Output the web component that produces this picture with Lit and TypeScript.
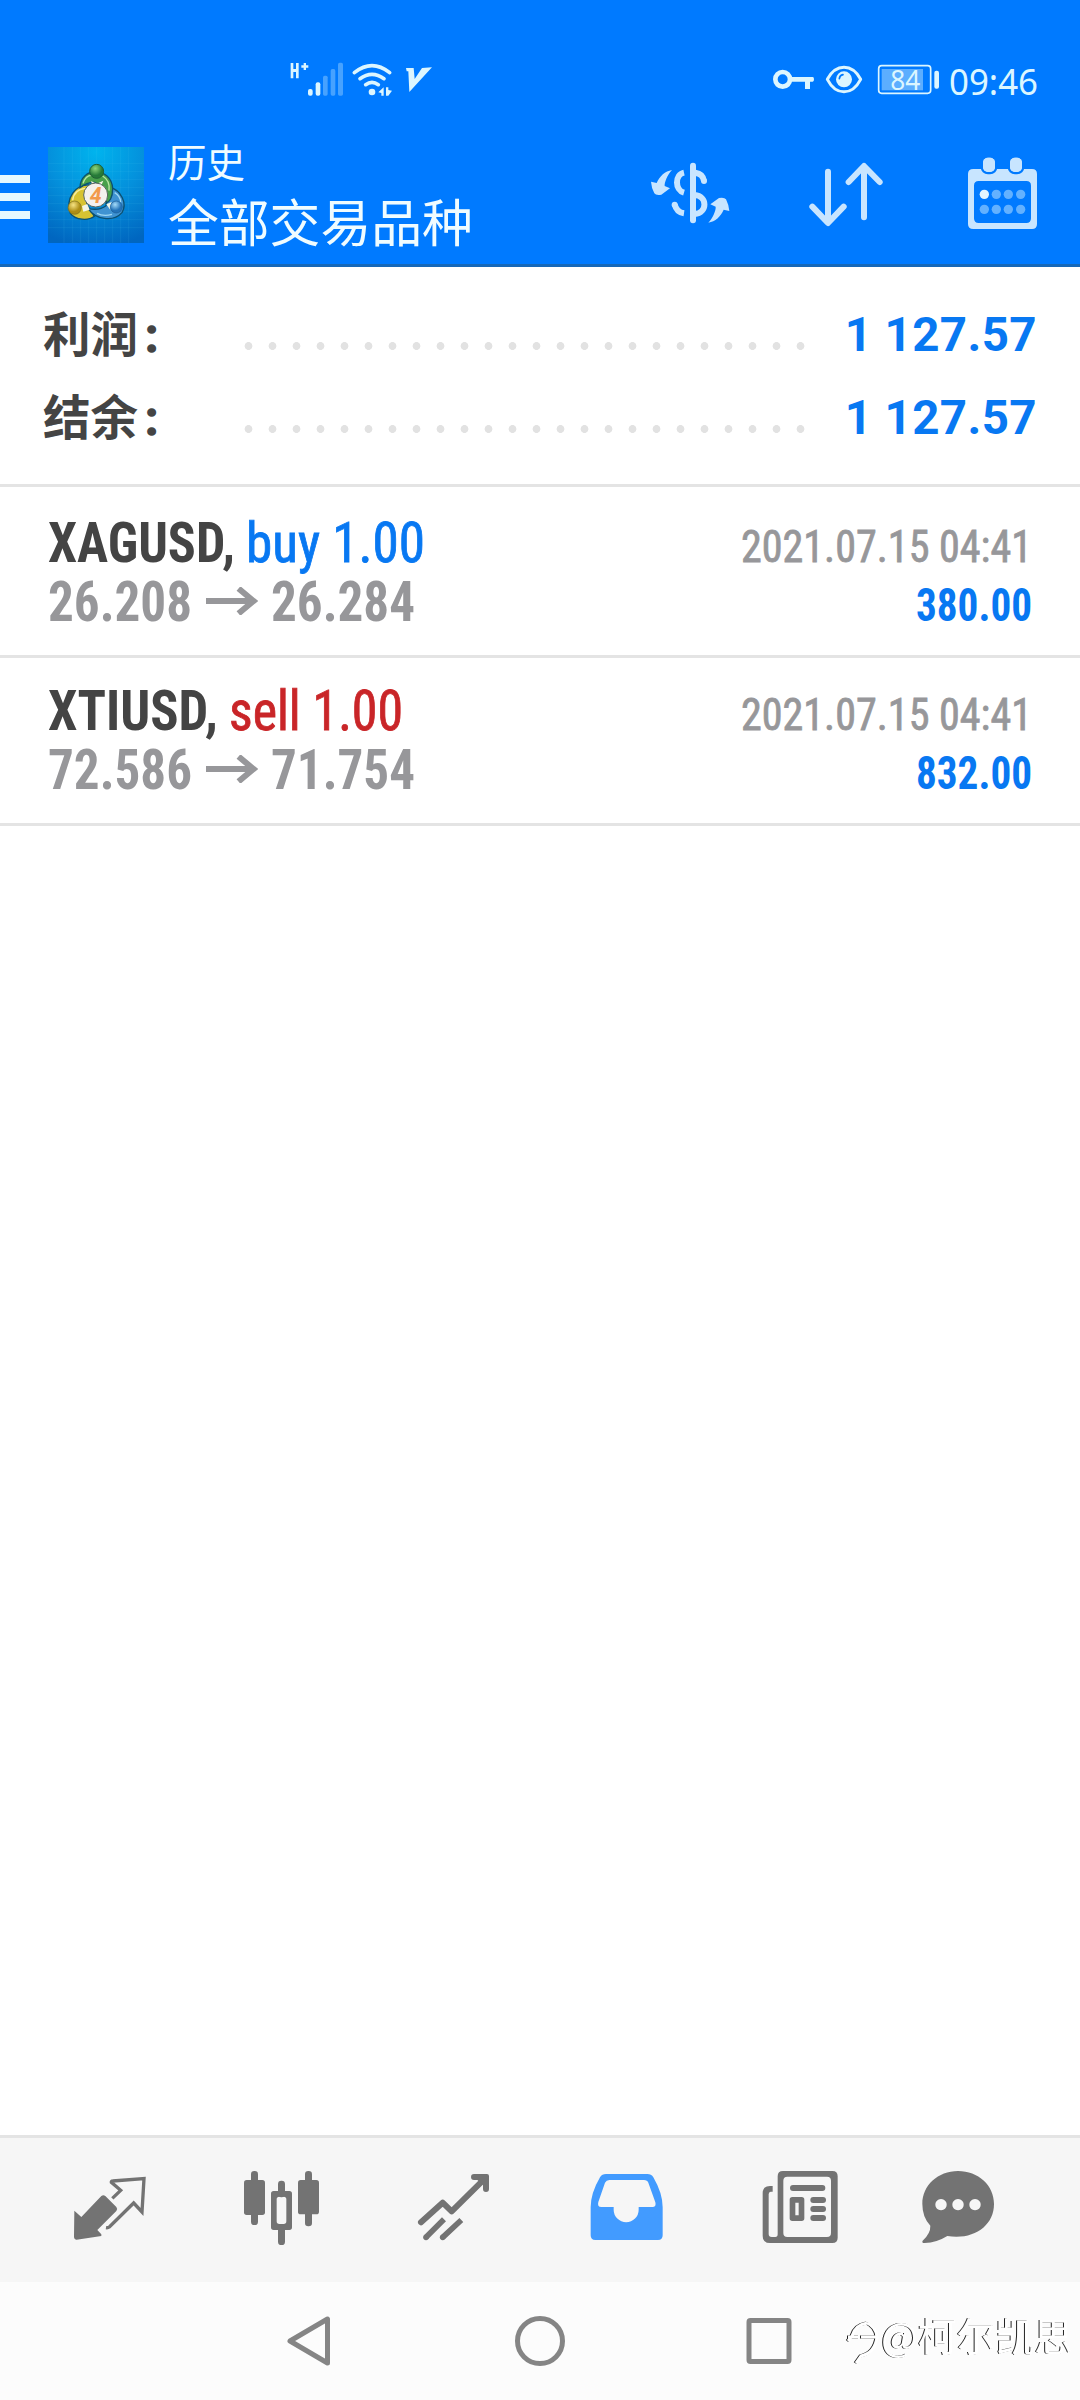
import { LitElement, html, svg, css } from "lit";
import { customElement } from "lit/decorators.js";

interface Segment {
  text: string;
  width: number;
  tone: string;
}

interface Deal {
  symbol: Segment;
  side: Segment;
  open: string;
  close: string;
  time: string;
  profit: string;
}

const deals: Deal[] = [
  {
    symbol: { text: "XAGUSD,", width: 187, tone: "ink bold" },
    side: { text: "buy 1.00", width: 179, tone: "blue regular" },
    open: "26.208",
    close: "26.284",
    time: "2021.07.15 04:41",
    profit: "380.00",
  },
  {
    symbol: { text: "XTIUSD,", width: 170, tone: "ink bold" },
    side: { text: "sell 1.00", width: 174, tone: "red regular" },
    open: "72.586",
    close: "71.754",
    time: "2021.07.15 04:41",
    profit: "832.00",
  },
];

const totals = [
  { label: "利润", value: "1 127.57" },
  { label: "结余", value: "1 127.57" },
];

/* Condensed text run fitted to a fixed advance width. */
const condensed = (text: string, width: number, size: number, tone: string, base = 59.5) => html`
  <svg class="run ${tone}" width=${width} height="60" viewBox="0 0 ${width} 60">
    <text x="0" y=${base} font-size=${size} textLength=${width} lengthAdjust="spacingAndGlyphs">${text}</text>
  </svg>
`;

const tabs = [
  svg`<path d="M103 272L124 291L184 228Q190 223 196 228L229 261Q234 267 229 273L172 330L184 343V348L110 359Q103 360 102 352Z"/>
    <path class="line" stroke-width="10" d="M217 235L242 211L214 187Q213 183 218 183L312 176L306 276L281 249L208 321Q204 324 198 323"/>`,
  svg`<rect x="633" y="153" width="21" height="162" rx="10"/><rect x="612" y="180" width="63" height="105" rx="8"/>
    <rect x="795" y="153" width="21" height="166" rx="10"/><rect x="774" y="180" width="63" height="103" rx="8"/>
    <rect x="714" y="182" width="21" height="50" rx="10"/><rect x="714" y="313" width="21" height="62" rx="10"/>
    <path fill-rule="evenodd" d="M701 213H748Q756 213 756 221V322Q756 330 748 330H701Q693 330 693 322V221Q693 213 701 213ZM718 230Q710 230 710 238V304Q710 312 718 312H731Q739 312 739 304V238Q739 230 731 230Z"/>`,
  svg`<path class="line" stroke-width="18" stroke-linecap="round" stroke-linejoin="round" d="M1143 307L1208 248L1235 274L1332 178"/>
    <path d="M1302 162H1341Q1347 162 1347 168V207Q1347 216 1338 216Q1329 216 1329 207V194L1312 180H1302Q1293 180 1293 171Q1293 162 1302 162Z"/>
    <path class="line" stroke-width="17" d="M1158 352L1212 298M1208 352L1264 300"/><circle cx="1158" cy="352" r="8.5"/><circle cx="1208" cy="352" r="8.5"/>`,
  svg`<path fill-rule="evenodd" d="M138 162H262Q274 162 280 172Q308 220 308 262V346Q308 360 294 360H106Q92 360 92 346V262Q92 220 120 172Q126 162 138 162ZM148 180Q139 180 135 188L115 246Q111 261 124 261H161V269A37 37 0 0 0 236 269V261H277Q290 261 286 247L265 188Q262 180 252 180Z"/>`,
  svg`<path fill-rule="evenodd" d="M669 153H817Q833 153 833 169V353Q833 369 817 369H630Q608 369 608 347V220Q608 198 630 198H638V215H632Q626 215 626 223V342Q626 351 635 351H646Q653 351 653 343V169Q653 153 669 153ZM682 170Q670 170 670 182V339Q670 351 682 351H801Q813 351 813 339V182Q813 170 801 170Z"/>
    <rect x="690" y="195" width="106" height="18" rx="9"/>
    <path fill-rule="evenodd" d="M697 231H725Q733 231 733 239V295Q733 303 725 303H697Q689 303 689 295V239Q689 231 697 231ZM706 248V286H716V248Z"/>
    <rect x="751" y="231" width="47" height="18" rx="9"/><rect x="751" y="258" width="47" height="18" rx="9"/><rect x="751" y="285" width="47" height="18" rx="9"/>`,
  svg`<path fill-rule="evenodd" d="M1194 153C1255 153 1302 196 1302 252C1302 318 1240 361 1162 348Q1130 368 1094 369Q1084 369 1088 362Q1112 340 1111 317Q1087 292 1087 252C1087 196 1134 153 1194 153ZM1143 237A17 17 0 1 0 1143.1 237ZM1194 237A17 17 0 1 0 1194.1 237ZM1245 237A17 17 0 1 0 1245.1 237Z"/>`,
];
const tabBoxes = [
  "-48 54 516 432",
  "468 54 516 432",
  "984 54 516 432",
  "-60 54 516 432",
  "456 54 516 432",
  "972 54 516 432",
];

@customElement("app-root")
export class AppRoot extends LitElement {
  static styles = css`
    :host {
      display: flex;
      flex-direction: column;
      width: 1080px;
      height: 2400px;
      background: #fff;
      font-family: Roboto, "Noto Sans CJK SC", sans-serif;
      overflow: hidden;
    }
    svg {
      display: block;
      flex: none;
    }
    .status {
      display: flex;
      height: 120px;
      background: #007aff;
      color: #dcf6ff;
      fill: #dcf6ff;
    }
    .status .left {
      margin-left: 270px;
    }
    .status .right {
      margin-left: 280px;
    }
    .pad {
      padding-top: 40px;
    }
    .line {
      fill: none;
      stroke: currentColor;
    }
    .toolbar {
      display: flex;
      height: 144px;
      background: #007aff;
      border-bottom: 3px solid #1668b8;
      color: #c8e5ff;
      fill: #c8e5ff;
    }
    .menu {
      display: flex;
      flex-direction: column;
      gap: 9.4px;
      width: 30px;
      padding-top: 54.7px;
      margin-right: 18px;
    }
    .menu i {
      height: 8.6px;
      background: #e6f8ff;
    }
    .logo {
      margin-top: 27px;
    }
    .titles {
      flex: 1;
      margin-left: 24px;
      padding-top: 15px;
      color: #f0fcff;
      font-family: "Noto Sans CJK SC", sans-serif;
      white-space: nowrap;
    }
    .title {
      font-size: 38.5px;
      line-height: 50px;
    }
    .subtitle {
      font-size: 50.8px;
      line-height: 71px;
    }
    .actions {
      display: flex;
      gap: 56px;
      padding-right: 28px;
    }
    .summary {
      height: 192px;
      padding: 25px 43px 0 43px;
      border-bottom: 3px solid #e4e4e4;
    }
    .total {
      display: flex;
      height: 83px;
      font-weight: 700;
      font-size: 47.5px;
      white-space: nowrap;
    }
    .label {
      width: 200.5px;
      line-height: 79px;
      color: #444;
      font-family: "Noto Sans CJK SC", sans-serif;
    }
    .colon {
      font-family: Roboto, sans-serif;
      margin-left: 7px;
      -webkit-text-stroke: 1.4px #444;
    }
    .dots {
      width: 576px;
      height: 8px;
      margin-top: 50px;
      background: radial-gradient(circle at 4.5px 4px, #e2e2e2 3.6px, transparent 4.2px) 0 0 / 24px 8px;
    }
    .amount {
      flex: 1;
      line-height: 86px;
      letter-spacing: 0.4px;
      text-align: right;
      color: #0878f2;
    }
    .deals {
      flex: 1;
      padding-top: 3px;
    }
    .deal {
      height: 153px;
      padding: 12px 48px 0 48px;
      border-bottom: 3px solid #e4e4e4;
    }
    .row {
      display: flex;
      height: 59.5px;
    }
    .run {
      overflow: visible;
      font-family: "Roboto Condensed", Roboto, sans-serif;
    }
    .bold {
      font-weight: 700;
    }
    .ink {
      fill: #444;
    }
    .blue {
      fill: #0878f2;
      stroke: #0878f2;
    }
    .red {
      fill: #c92528;
      stroke: #c92528;
    }
    .grey {
      fill: #97979a;
      stroke: #97979a;
    }
    .regular {
      stroke-width: 0.8px;
    }
    .run.bold {
      stroke: none;
    }
    .side {
      margin-left: 11px;
    }
    .arrow {
      margin: 25px 13px 0 14px;
      stroke: #97979a;
    }
    .spacer {
      flex: 1;
    }
    .time {
      margin-right: 0;
    }
    .tabs {
      display: flex;
      height: 144px;
      padding-left: 24px;
      border-top: 3px solid #e4e4e4;
      background: #f6f6f6;
      color: #737373;
      fill: #737373;
    }
    .active {
      fill: #429bff;
    }
    .nav {
      display: flex;
      height: 118px;
      background: #fcfcfc;
    }
    .keys {
      margin-left: 280px;
      color: #858585;
    }
    .mark {
      display: flex;
      padding-top: 25px;
      margin-left: 45px;
      color: #fff;
      filter: drop-shadow(-0.8px 0.9px 0.4px #222);
    }
    .handle {
      font: 38.8px/54px "Noto Sans CJK SC", sans-serif;
      white-space: nowrap;
      margin-left: 2px;
    }
  `;

  private renderStatus() {
    return html`
      <div class="status">
        <div class="left pad">
          <svg width="200" height="70" viewBox="0 0 600 210">
            <path d="M62 69H70V87H78V69H86V115H78V96H70V115H62ZM94 76H101V69H108V76H115V83H108V90H101V83H94Z" />
            <rect x="114" y="147" width="14" height="20" rx="6" />
            <rect x="137" y="127" width="14" height="40" rx="6" />
            <g opacity="0.32">
              <rect x="159" y="107" width="14" height="60" rx="5" />
              <rect x="182" y="87" width="14" height="80" rx="5" />
              <rect x="204" y="68" width="15" height="99" rx="5" />
            </g>
            <path class="line" stroke-width="11" stroke-linecap="round" d="M253 98Q306 56 359 98M270 116Q306 90 342 116M287 134Q306 120 325 134" />
            <circle cx="306" cy="156" r="10" />
            <path d="M325 157L341 142V167H334V159ZM348 142H355V150L366 152L355 167H348Z" />
            <path d="M408 84H431L434 117L456 84L486 82L418 156L415 94H410Z" />
          </svg>
        </div>
        <div class="right pad">
          <svg width="330" height="80" viewBox="0 0 990 240">
            <circle class="line" cx="98" cy="118" r="22" stroke-width="14" />
            <path d="M120 111H188Q192 111 192 118T188 125H180V147H165V125H120Z" />
            <path class="line" stroke-width="9" stroke-linejoin="round" d="M232 118C258 70 306 70 332 118C306 168 258 168 232 118Z" />
            <circle cx="282" cy="118" r="24" />
            <path fill="none" stroke="#007aff" stroke-width="5" stroke-linecap="round" d="M268 116Q269 106 279 104" />
            <rect class="line" x="386" y="77" width="156" height="83" rx="9" stroke-width="5" />
            <rect x="395" y="87" width="124" height="64" opacity="0.42" />
            <rect x="553" y="92" width="14" height="54" rx="6" />
            <text x="421" y="149" font-size="79" font-family="Noto Sans" textLength="90" lengthAdjust="spacingAndGlyphs">84</text>
            <text x="597" y="164" font-size="110" font-family="Noto Sans" textLength="267" lengthAdjust="spacingAndGlyphs">09:46</text>
          </svg>
        </div>
      </div>
    `;
  }

  private renderLogo() {
    return html`
      <svg class="logo" width="96" height="96" viewBox="24 20 288 288">
        <defs>
          <radialGradient id="sky" cx="0.5" cy="0.05" r="1">
            <stop offset="0" stop-color="#00b4ee" />
            <stop offset="0.5" stop-color="#0490dc" />
            <stop offset="1" stop-color="#0066c0" />
          </radialGradient>
          <radialGradient id="gh" cx="0.4" cy="0.3"><stop offset="0" stop-color="#8fd67d" /><stop offset="1" stop-color="#267a38" /></radialGradient>
          <radialGradient id="yh" cx="0.4" cy="0.3"><stop offset="0" stop-color="#f5e384" /><stop offset="1" stop-color="#ad8d14" /></radialGradient>
          <radialGradient id="bh" cx="0.4" cy="0.3"><stop offset="0" stop-color="#a5dcfa" /><stop offset="1" stop-color="#2272b8" /></radialGradient>
        </defs>
        <rect x="24" y="20" width="288" height="288" fill="url(#sky)" />
        <path stroke="#5fd0f5" stroke-opacity="0.16" stroke-width="2" d="M72 20V308M98 20V308M122 20V308M146 20V308M170 20V308M194 20V308M218 20V308M242 20V308M266 20V308M24 70H312M24 94H312M24 118H312M24 142H312M24 166H312M24 190H312M24 214H312M24 238H312M24 262H312" />
        <g stroke="#0c5070" stroke-width="4">
          <path fill="#d7c332" d="M152 134C105 130 76 175 91 219C107 240 145 242 163 228L149 205Q128 180 152 134Z" />
          <path fill="#3f93d2" d="M208 140C245 150 262 190 246 217C220 246 166 238 144 204Q178 212 198 196Z" />
          <path fill="#48a04b" d="M120 142C121 78 214 78 218 145C218 172 208 186 198 188Q204 144 163 126Q140 126 120 142Z" />
        </g>
        <path fill="none" stroke="#b7e4a2" stroke-width="4" d="M129 129Q137 104 156 105M188 107Q211 121 207 151" />
        <path fill="none" stroke="#f6ec9d" stroke-width="4" d="M136 144Q101 148 98 180" />
        <path fill="none" stroke="#9fd8f4" stroke-width="4" d="M224 157Q242 168 242 186M171 219Q190 229 216 222" />
        <path fill="#f3f4e4" d="M153 122L170 130L190 121L181 142H160ZM126 197L142 191L149 208L130 214ZM199 192L215 185L211 209Z" />
        <circle cx="170" cy="93" r="21" fill="url(#gh)" stroke="#205f35" stroke-width="3" />
        <circle cx="104" cy="202" r="20" fill="url(#yh)" stroke="#7b7020" stroke-width="2" />
        <circle cx="229" cy="200" r="18" fill="url(#bh)" stroke="#195b94" stroke-width="2" />
        <circle cx="167" cy="164" r="36" fill="#f4f1ee" stroke="#56655c" stroke-width="3" />
        <text x="167" y="187" text-anchor="middle" font-size="64" font-family="Roboto" font-weight="700" font-style="italic" fill="#f29a4c">4</text>
      </svg>
    `;
  }

  private renderToolbar() {
    return html`
      <div class="toolbar">
        <div class="menu"><i></i><i></i><i></i></div>
        ${this.renderLogo()}
        <div class="titles">
          <div class="title">历史</div>
          <div class="subtitle">全部交易品种</div>
        </div>
        <div class="actions">
          <svg width="100" height="144" viewBox="60 -30 300 432">
            <rect x="210" y="98" width="18" height="182" rx="9" />
            <path class="line" stroke-width="18" d="M192 128C164 134 164 180 192 188M164 223C168 240 178 248 192 250M226 128C241 130 250 139 252 153M224 195C263 198 263 249 224 252" />
            <circle cx="164" cy="224" r="9" />
            <circle cx="252" cy="153" r="9" />
            <path d="M156 120C141 136 133 158 134 168L150 175L124 194Q108 197 103 190Q94 172 93 155L110 159C119 138 135 124 156 120Z" />
            <path transform="rotate(180 210.5 199)" d="M156 120C141 136 133 158 134 168L150 175L124 194Q108 197 103 190Q94 172 93 155L110 159C119 138 135 124 156 120Z" />
          </svg>
          <svg width="100" height="144" viewBox="528 -30 300 432">
            <path class="line" stroke-width="18" stroke-linecap="round" stroke-linejoin="round" d="M624 125V278M577 230L624 279L671 230M732 262V110M686 156L732 108L779 156" />
          </svg>
          <svg width="100" height="144" viewBox="996 -30 300 432">
            <path fill-rule="evenodd" d="M1060 117H1236Q1251 117 1251 132V282Q1251 297 1236 297H1060Q1044 297 1044 282V132Q1044 117 1060 117ZM1076 153Q1062 153 1062 167V265Q1062 279 1076 279H1219Q1233 279 1233 265V167Q1233 153 1219 153Z" />
            <g stroke="#007aff" stroke-width="14" paint-order="stroke">
              <rect x="1089" y="83" width="36" height="43" rx="15" />
              <rect x="1170" y="83" width="36" height="43" rx="15" />
            </g>
            <rect x="1089" y="83" width="36" height="43" rx="15" />
            <rect x="1170" y="83" width="36" height="43" rx="15" />
            <circle cx="1093" cy="193" r="14" fill="#e2f5ff" />
            <g fill="#63b1ff">
              <circle cx="1129" cy="193" r="14" /><circle cx="1165" cy="193" r="14" /><circle cx="1202" cy="193" r="14" />
              <circle cx="1093" cy="238" r="14" /><circle cx="1129" cy="238" r="14" /><circle cx="1165" cy="238" r="14" /><circle cx="1202" cy="238" r="14" />
            </g>
          </svg>
        </div>
      </div>
    `;
  }

  private renderDeal(deal: Deal) {
    return html`
      <div class="deal">
        <div class="row">
          ${condensed(deal.symbol.text, deal.symbol.width, 55, deal.symbol.tone)}
          <div class="side">${condensed(deal.side.text, deal.side.width, 55, deal.side.tone)}</div>
          <div class="spacer"></div>
          <div class="time">${condensed(deal.time, 291, 45, "grey regular")}</div>
        </div>
        <div class="row">
          ${condensed(deal.open, 144, 55, "grey bold", 58.7)}
          <svg class="arrow" width="52" height="28" viewBox="0 0 52 28" fill="none">
            <path stroke-width="6" d="M0 14H47M32.5 1.5L47.5 14L32.5 26.5" />
          </svg>
          ${condensed(deal.close, 144, 55, "grey bold", 58.7)}
          <div class="spacer"></div>
          ${condensed(deal.profit, 116, 45.5, "blue bold", 58.7)}
        </div>
      </div>
    `;
  }

  render() {
    return html`
      ${this.renderStatus()} ${this.renderToolbar()}
      <div class="summary">
        ${totals.map(
          (t) => html`
            <div class="total">
              <div class="label">${t.label}<span class="colon">:</span></div>
              <div class="dots"></div>
              <div class="amount">${t.value}</div>
            </div>
          `,
        )}
      </div>
      <div class="deals">${deals.map((d) => this.renderDeal(d))}</div>
      <div class="tabs">
        ${tabs.map(
          (icon, i) => html`<svg class=${i === 3 ? "active" : ""} width="172" height="144" viewBox=${tabBoxes[i]}>${icon}</svg>`,
        )}
      </div>
      <div class="nav">
        <svg class="keys" width="520" height="118" viewBox="280 2282 520 118">
          <path class="line" stroke-width="5" stroke-linejoin="round" d="M290 2341L327.5 2319V2363Z" />
          <circle class="line" stroke-width="5" cx="540" cy="2341" r="22.5" />
          <rect class="line" stroke-width="5" x="749" y="2320.5" width="40" height="41" rx="1.5" />
        </svg>
        <div class="mark">
          <svg width="34" height="58" viewBox="0 -2 34 58" fill="none" stroke="#fff" stroke-width="3">
            <path d="M3 32L7 27Q10 16 22 14M3 28H14M16 28H32Q31 18 22 14M32 28Q30 44 16 47L11 54" />
          </svg>
          <div class="handle">@柯尔凯思</div>
        </div>
      </div>
    `;
  }
}
